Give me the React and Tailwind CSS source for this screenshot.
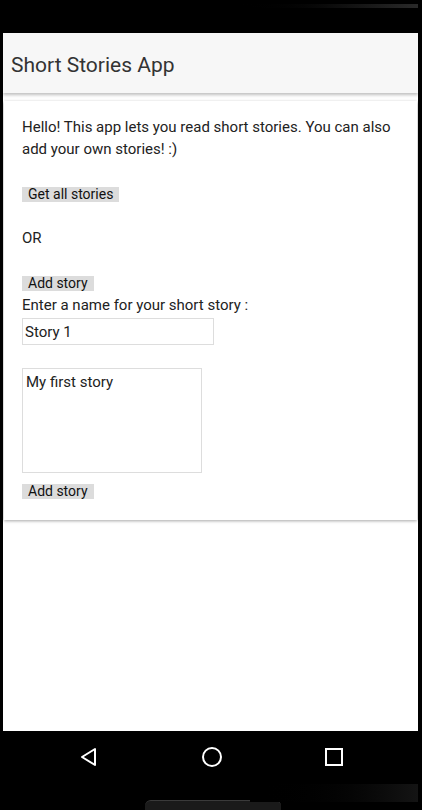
import React from 'react'

const font = { fontFamily: 'Roboto, "Liberation Sans", sans-serif' }

const GrayButton = ({ children }) => (
  <button className="bg-[#dcdcdc] text-[#111] text-[14px] leading-[15px] h-[15px] px-[6px] self-start">
    {children}
  </button>
)

export default function App() {
  return (
    <div className="w-[422px] h-[810px] bg-black flex flex-col overflow-hidden" style={font}>
      {/* status bar */}
      <div className="h-[33px] relative">
        <div className="absolute top-[4px] left-[230px] right-[4px] h-[4px] bg-gradient-to-r from-black to-[#2a2a2a]" />
      </div>

      {/* screen */}
      <div className="flex-1 bg-white ml-[3px] mr-[4px] flex flex-col">
        <div className="h-[60px] bg-[#f7f7f7] flex items-center pt-[6px] px-[8px] shadow-[0_2px_3px_rgba(0,0,0,0.25)] relative z-10">
          <h1 className="text-[21px] text-[#333]">Short Stories App</h1>
        </div>

        <div className="mt-[8px] mx-[1px] bg-white shadow-[0_1px_3px_rgba(0,0,0,0.35)] px-[18px] pt-[15px] pb-[18px] flex flex-col text-[15px] text-[#222] leading-[22px]">
          <p>Hello! This app lets you read short stories. You can also add your own stories! :)</p>
          <div className="mt-[23px]"><GrayButton>Get all stories</GrayButton></div>
          <p className="mt-[22px]">OR</p>
          <div className="mt-[23px]"><GrayButton>Add story</GrayButton></div>
          <p>Enter a name for your short story :</p>
          <input
            readOnly
            value="Story 1"
            className="mt-[2px] w-[192px] h-[27px] border border-[#ddd] px-[2px] text-[15px] text-[#222] outline-none"
          />
          <textarea
            readOnly
            value="My first story"
            className="mt-[23px] w-[180px] h-[105px] border border-[#ddd] px-[3px] pt-[2px] text-[15px] text-[#222] resize-none outline-none"
          />
          <div className="mt-[7px]"><GrayButton>Add story</GrayButton></div>
        </div>
      </div>

      {/* nav bar */}
      <div className="h-[79px] relative flex justify-center">
        <div className="flex items-center justify-between w-[264px] h-[52px]">
          <svg width="20" height="20" viewBox="0 0 20 20">
            <path d="M16 2 L16 18 L3 10 Z" fill="none" stroke="white" strokeWidth="2" strokeLinejoin="round" />
          </svg>
          <svg width="22" height="22" viewBox="0 0 22 22">
            <circle cx="11" cy="11" r="9" fill="none" stroke="white" strokeWidth="2" />
          </svg>
          <svg width="18" height="18" viewBox="0 0 18 18">
            <rect x="1" y="1" width="16" height="16" fill="none" stroke="white" strokeWidth="2" />
          </svg>
        </div>
        <div className="absolute bottom-0 left-[145px] w-[136px] h-[10px] rounded-t-[6px] bg-[#1a1a1a] border-t border-[#3a3a3a]" />
        <div className="absolute bottom-[8px] left-[250px] right-[4px] h-[18px] bg-gradient-to-r from-black to-[#141414]" />
      </div>
    </div>
  )
}
